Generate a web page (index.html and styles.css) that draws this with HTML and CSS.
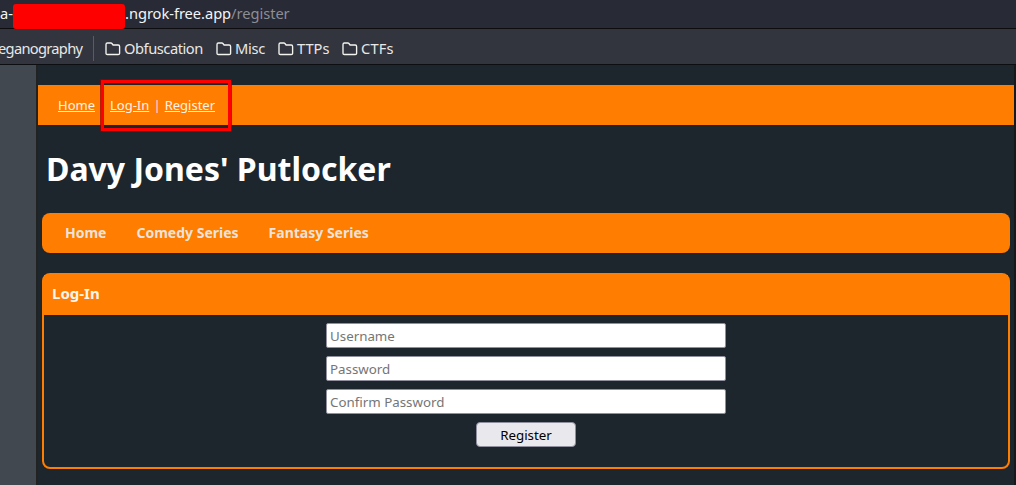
FILE: index.html
```
<!DOCTYPE html>
<html lang="en">
<head>
<meta charset="utf-8">
<title>Davy Jones' Putlocker</title>
<link rel="stylesheet" href="styles.css">
</head>
<body>
<svg class="defs" aria-hidden="true"><symbol id="folder" viewBox="0 0 16 14"><path d="M2.400 1h3.500q.6 0 1 .5l1.200 1.500h5.100q1.400 0 1.400 1.400v7q0 1.100-1.400 1.100H2.400Q1 12.500 1 11.400V2.400Q1 1 2.400 1z" fill="none" stroke="#f3f3ef" stroke-width="1.350"/></symbol></svg>
<div class="url-bar"><span class="url-host">a-</span><span class="redaction"></span><span class="url-domain">.ngrok-free.app</span><span class="url-path">/register</span></div>
<div class="bookmarks">
  <span class="bookmark-cut"><span class="label steg">eganography</span></span>
  <span class="divider"></span>
  <span class="bookmark obf"><svg class="folder"><use href="#folder"/></svg><span class="label">Obfuscation</span></span>
  <span class="bookmark misc"><svg class="folder"><use href="#folder"/></svg><span class="label">Misc</span></span>
  <span class="bookmark ttps"><svg class="folder"><use href="#folder"/></svg><span class="label">TTPs</span></span>
  <span class="bookmark ctfs"><svg class="folder"><use href="#folder"/></svg><span class="label">CTFs</span></span>
</div>
<div class="viewport">
  <div class="side"></div>
  <main class="page">
    <div class="top-nav">
      <a class="home" href="#">Home</a>
      <span class="account"><a href="#">Log-In</a> | <a href="#">Register</a><span class="highlight"></span></span>
    </div>
    <h1 class="title">Davy Jones' Putlocker</h1>
    <nav class="menu"><a href="#">Home</a><a href="#">Comedy Series</a><a href="#">Fantasy Series</a></nav>
    <section class="panel">
      <h2 class="panel-title">Log-In</h2>
      <form class="form">
        <input class="field" type="text" placeholder="Username">
        <input class="field" type="password" placeholder="Password">
        <input class="field" type="password" placeholder="Confirm Password">
        <button class="submit" type="button">Register</button>
      </form>
    </section>
  </main>
</div>
</body>
</html>
```
FILE: styles.css
```
* { box-sizing: border-box; }
body {
  margin: 0;
  height: 485px;
  overflow: hidden;
  display: flex;
  flex-direction: column;
  background: #1e262d;
  font-family: "Noto Sans", sans-serif;
}
.defs { position: absolute; width: 0; height: 0; }
.url-bar {
  height: 29px;
  flex: none;
  display: flex;
  background: #282a35;
  border-bottom: 1px solid #0d0d10;
  color: #f5f5f5;
  font-size: 14.67px;
  line-height: 26px;
  white-space: nowrap;
}
.url-host { width: 13px; }
.redaction { width: 112px; height: 25px; margin-top: 4px; border-radius: 3px; background: #f00; }
.url-domain, .url-path { letter-spacing: -.04px; }
.url-path { color: #8d8e95; }
.bookmarks {
  height: 36px;
  flex: none;
  display: flex;
  align-items: center;
  background: #33353e;
  border-bottom: 1px solid #0d0e11;
  color: #e8e8e6;
  font-size: 14.67px;
  line-height: 20px;
  white-space: nowrap;
}
.bookmark-cut { width: 93px; margin-top: 3px; }
.steg { margin-left: -2px; letter-spacing: -.7px; }
.divider { width: 1px; height: 25px; margin: 3px 11px 0 0; background: #5a5c64; }
.bookmark { display: flex; align-items: center; gap: 3px; margin-top: 3px; }
.bookmark .label { margin-top: -1px; }
.folder { width: 16px; height: 14px; flex: none; margin-top: 1px; }
.obf { width: 111px; letter-spacing: -.45px; }
.misc { width: 62px; letter-spacing: -.25px; }
.ttps { width: 64px; }
.ctfs { letter-spacing: .2px; }
.viewport { flex: 1; display: flex; min-height: 0; }
.side { width: 38px; flex: none; background: #41484f; border-right: 2px solid #222221; }
.page { flex: 1; padding-top: 20px; border-right: 2px solid #15191c; }
.top-nav {
  display: flex;
  align-items: center;
  gap: 15px;
  height: 40px;
  padding-left: 20px;
  background: #ff7d00;
  color: #f3e5dc;
  font-size: 13px;
}
.top-nav a { color: #fff3e8; }
.account { position: relative; word-spacing: .7px; }
.highlight { position: absolute; left: -9px; top: -16px; width: 130px; height: 51px; border: 3px solid #f00; outline: 1px solid rgba(150, 0, 0, .75); }
.title { margin: 22px 0 0 8px; color: #fff; font-size: 32px; line-height: 44px; font-weight: 700; }
.menu {
  display: flex;
  align-items: center;
  gap: 30px;
  height: 40px;
  margin: 22px 4px 20px;
  padding: 0 0 2px 23px;
  border-radius: 8px;
  background: #ff7d00;
  font-size: 14px;
  font-weight: 700;
}
.menu a { color: #eee3dc; text-decoration: none; }
.panel { height: 196px; margin: 0 4px; border: 2px solid #ff7d00; border-radius: 8px; }
.panel-title { height: 40px; margin: 0; padding-left: 8px; background: #ff7d00; color: #fff5eb; font-size: 15px; line-height: 37px; }
.form { display: flex; flex-direction: column; align-items: center; gap: 8px; padding-top: 8px; }
.field { width: 400px; height: 25px; padding: 0 3px; border: 1px solid #8f8f9d; border-radius: 2px; background: #fff; font: 13.333px "Noto Sans", sans-serif; }
.field::placeholder { color: #757575; }
.submit { width: 100px; height: 25px; padding: 0; border: 1px solid #8f8f9d; border-radius: 4px; background: #e9e9ed; color: #000; font: 13.333px "Noto Sans", sans-serif; }
```
